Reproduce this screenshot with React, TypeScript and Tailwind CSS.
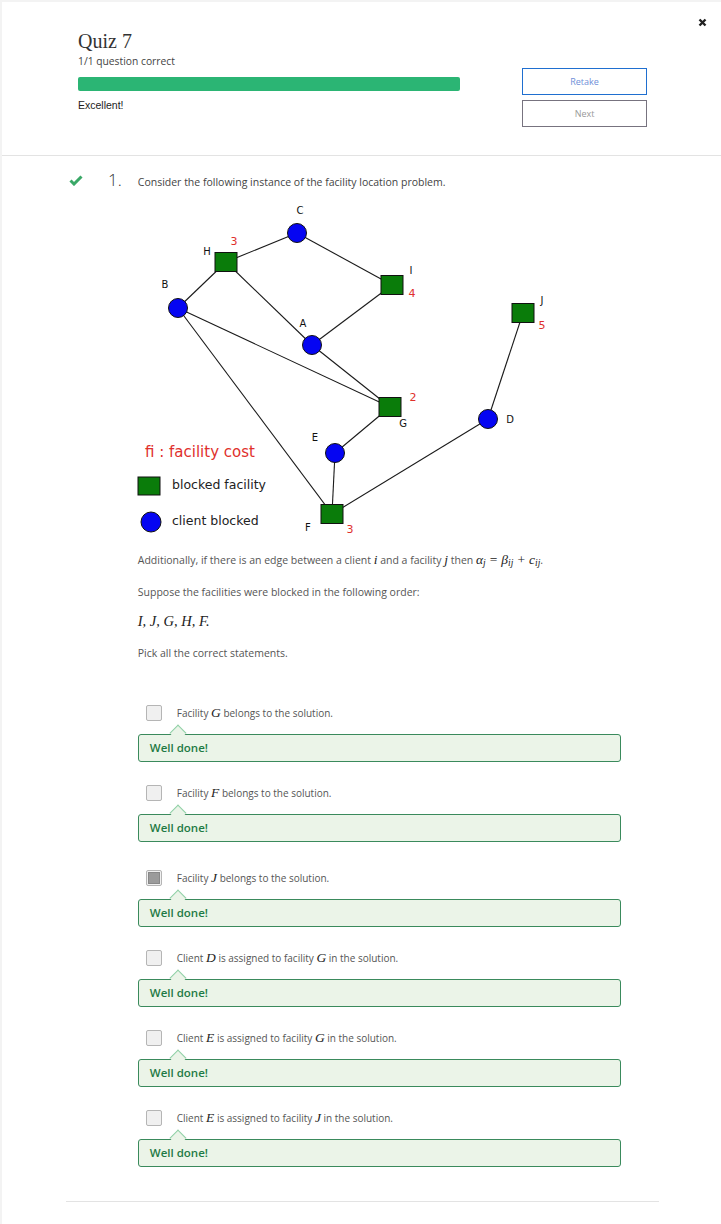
import React from 'react';

const M = ({ children, size = 'text-[13.5px]' }: { children: React.ReactNode; size?: string }) => (
  <span className={`font-['Liberation_Serif',serif] italic text-[#222] ${size}`}>{children}</span>
);

type Opt = { parts: React.ReactNode; checked?: boolean; gap?: string };

const options: Opt[] = [
  { parts: <>Facility <M>G</M> belongs to the solution.</> },
  { parts: <>Facility <M>F</M> belongs to the solution.</> },
  { parts: <>Facility <M>J</M> belongs to the solution.</>, checked: true, gap: 'mt-[28px]' },
  { parts: <>Client <M>D</M> is assigned to facility <M>G</M> in the solution.</> },
  { parts: <>Client <M>E</M> is assigned to facility <M>G</M> in the solution.</> },
  { parts: <>Client <M>E</M> is assigned to facility <M>J</M> in the solution.</> },
];

const circles = [
  [297, 233], [178, 308], [312, 345], [488, 419], [335, 453],
];
const squares = [
  [226, 262], [392, 285], [523, 313], [390, 407], [332, 514],
];
const edges = [
  [226, 262, 297, 233], [297, 233, 392, 285], [226, 262, 178, 308], [226, 262, 312, 345],
  [392, 285, 312, 345], [178, 308, 390, 407], [178, 308, 332, 514], [312, 345, 390, 407],
  [390, 407, 335, 453], [335, 453, 332, 514], [332, 514, 488, 419], [488, 419, 523, 313],
];
const labels: [string, number, number][] = [
  ['C', 300, 214], ['H', 207, 255], ['I', 411, 274], ['B', 165, 288], ['A', 303, 327],
  ['J', 542, 304], ['G', 403, 427], ['D', 510, 423], ['E', 315, 441], ['F', 308, 531],
];
const costs: [string, number, number][] = [
  ['3', 234, 245], ['4', 412, 297], ['5', 542, 329], ['2', 413, 401], ['3', 350, 533],
];

function Graph() {
  return (
    <svg width="430" height="350" viewBox="130 192 430 350" className="block -ml-[8px]">
      {edges.map(([x1, y1, x2, y2], i) => (
        <line key={i} x1={x1} y1={y1} x2={x2} y2={y2} stroke="#1a1a1a" strokeWidth="1.1" />
      ))}
      {squares.map(([x, y], i) => (
        <rect key={i} x={x - 11} y={y - 9.5} width="22" height="19" fill="#0a7c0a" stroke="#111" strokeWidth="1" />
      ))}
      {circles.map(([x, y], i) => (
        <circle key={i} cx={x} cy={y} r="9.5" fill="#0505f2" stroke="#111" strokeWidth="1" />
      ))}
      <g fontFamily="'DejaVu Sans', sans-serif" fontSize="10" fill="#111" textAnchor="middle">
        {labels.map(([t, x, y]) => (
          <text key={t} x={x} y={y}>{t}</text>
        ))}
      </g>
      <g fontFamily="'DejaVu Sans', sans-serif" fontSize="11" fill="#e0302c" textAnchor="middle">
        {costs.map(([t, x, y], i) => (
          <text key={i} x={x} y={y}>{t}</text>
        ))}
      </g>
      <text x="145" y="457" fontFamily="'DejaVu Sans', sans-serif" fontSize="15" fill="#e0302c">fi : facility cost</text>
      <rect x="138" y="477" width="22" height="18" fill="#0a7c0a" stroke="#111" strokeWidth="1" />
      <text x="172" y="489" fontFamily="'DejaVu Sans', sans-serif" fontSize="12.5" fill="#222">blocked facility</text>
      <circle cx="151" cy="522" r="10" fill="#0505f2" stroke="#111" strokeWidth="1" />
      <text x="172" y="525" fontFamily="'DejaVu Sans', sans-serif" fontSize="12.5" fill="#222">client blocked</text>
    </svg>
  );
}

function Option({ o }: { o: Opt }) {
  return (
    <div className={o.gap ?? 'mt-[23px]'}>
      <div className="flex items-center h-[16px]">
        <div className="ml-[8px] w-[16px] h-[16px] rounded-[2px] border border-[#b5b5b5] bg-[#f0f0f0] flex items-center justify-center">
          {o.checked && <div className="w-[12px] h-[12px] bg-[#9b9b9b] border border-[#888]" />}
        </div>
        <div className="ml-[15px] text-[10px] text-[#555]">{o.parts}</div>
      </div>
      <div className="relative mt-[13px] h-[28px] rounded-[3px] border border-[#3a8a5c] bg-[#ebf4e8] flex items-center pl-[11px]">
        <div className="absolute -top-[8px] left-[33px] w-[12px] h-[12px] rotate-45 border-l border-t border-[#8fd0a6] bg-[#ebf4e8]" />
        <span className="text-[11.5px] font-semibold text-[#1e7a45]">Well done!</span>
      </div>
    </div>
  );
}

export default function App() {
  return (
    <div className="min-h-[1224px] bg-[#f3f3f3] pt-[2px] pl-[2px] font-['Open_Sans',sans-serif]">
      <div className="bg-white min-h-[1222px]">
        {/* Header */}
        <div className="relative h-[154px] border-b border-[#e3e3e3] flex pl-[76px] pr-[74px]">
          <svg className="absolute top-[16px] right-[14px]" width="9" height="9" viewBox="0 0 9 9">
            <path d="M1.5 1.5 L7.5 7.5 M7.5 1.5 L1.5 7.5" stroke="#222" strokeWidth="2.4" />
          </svg>
          <div className="w-[382px] pt-[27px]">
            <div className="font-['Liberation_Serif',serif] text-[20px] leading-[24px] text-[#333]">Quiz 7</div>
            <div className="text-[10.3px] leading-[14px] text-[#444] mt-[1px]">1/1 question correct</div>
            <div className="mt-[9px] h-[14px] rounded-[2px] bg-[#2bb574]" />
            <div className="mt-[7px] font-['Liberation_Sans',sans-serif] text-[10.5px] text-[#222]">Excellent!</div>
          </div>
          <div className="ml-auto w-[125px] pt-[66px] flex flex-col gap-[5px]">
            <button className="h-[27px] border border-[#1f6fd0] text-[9px] text-[#6f8fd8]">Retake</button>
            <button className="h-[27px] border border-[#77737f] text-[9px] text-[#999]">Next</button>
          </div>
        </div>

        {/* Question */}
        <div className="flex pt-[14px]">
          <div className="w-[67px]" />
          <svg width="14" height="11" viewBox="0 0 14 11" className="mt-[5px]">
            <path d="M1.5 5.5 L5 9 L12.5 1.5" fill="none" stroke="#3aa867" strokeWidth="3" />
          </svg>
          <div className="ml-[25px] text-[17px] leading-[20px] font-light text-[#333]">1.</div>
          <div className="ml-[16px] flex-1">
            <div className="text-[10.5px] leading-[20px] text-[#444] pt-[2px]">Consider the following instance of the facility location problem.</div>
            <Graph />
            <div className="w-[483px] text-[10.5px] leading-[16px] text-[#555]">
              <p className="mt-[10px]">
                Additionally, if there is an edge between a client <M>i</M> and a facility <M>j</M> then{' '}
                <M>
                  α<sub className="text-[9.5px]">j</sub>
                  <span className="not-italic mx-[4px]">=</span>
                  β<sub className="text-[9.5px]">ij</sub>
                  <span className="not-italic mx-[4px]">+</span>
                  c<sub className="text-[9.5px]">ij</sub>
                </M>
                .
              </p>
              <p className="mt-[16px]">Suppose the facilities were blocked in the following order:</p>
              <p className="mt-[13px]"><M size="text-[14.5px]">I,&nbsp;J,&nbsp;G,&nbsp;H,&nbsp;F.</M></p>
              <p className="mt-[15px]">Pick all the correct statements.</p>
              <div className="mt-[44px]">
                {options.map((o, i) => (
                  <Option key={i} o={o} />
                ))}
              </div>
            </div>
          </div>
        </div>
        <div className="mx-[64px] mt-[34px] border-t border-[#e3e3e3] w-[593px]" />
      </div>
    </div>
  );
}
